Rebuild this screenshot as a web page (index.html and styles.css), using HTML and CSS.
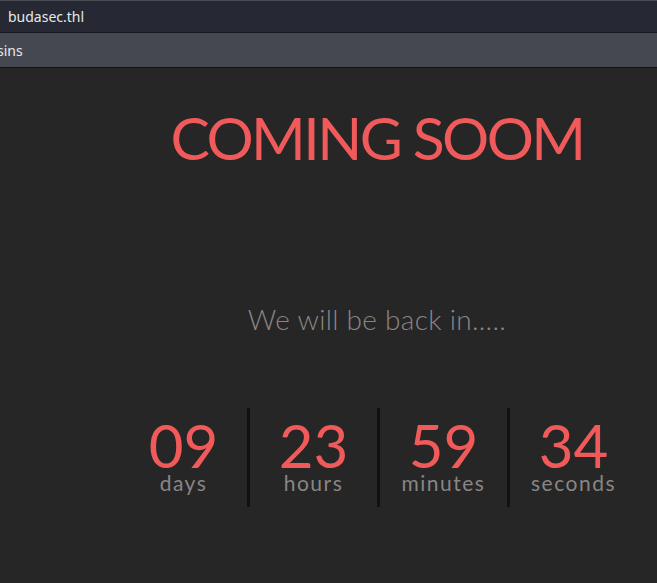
FILE: index.html
```html
<!DOCTYPE html>
<html>
<head>
<meta charset="utf-8">
<link rel="stylesheet" href="styles.css">
</head>
<body>
<div class="tabbar"><span class="tab-title">budasec.thl</span></div>
<div class="bookmarks"><span class="bm-text">sins</span></div>
<main class="page">
  <h1 class="title">COMING SOOM</h1>
  <p class="subtitle">We will be back in.....</p>
  <div class="countdown">
    <div class="unit"><span class="num">09</span><span class="label">days</span></div>
    <div class="unit"><span class="num">23</span><span class="label">hours</span></div>
    <div class="unit"><span class="num">59</span><span class="label">minutes</span></div>
    <div class="unit"><span class="num">34</span><span class="label">seconds</span></div>
  </div>
</main>
</body>
</html>
```
FILE: styles.css
```css
html, body {
  margin: 0;
  padding: 0;
  background: #262626;
  overflow: hidden;
  height: 583px;
}
body {
  font-family: "Open Sans", "DejaVu Sans", sans-serif;
}
.tabbar {
  height: 31px;
  border-top: 1px solid #4b4d55;
  border-bottom: 1px solid #16171b;
  background: #262833;
  display: flex;
  align-items: center;
  padding-left: 8px;
}
.tab-title {
  color: #e8e8ea;
  font-family: "Noto Sans", "DejaVu Sans", sans-serif;
  font-size: 14px;
}
.bookmarks {
  height: 34px;
  background: #454850;
  border-bottom: 1px solid #121317;
  display: flex;
  align-items: center;
  margin-left: -3px;
}
.bm-text {
  color: #e8e8ea;
  font-family: "Noto Sans", "DejaVu Sans", sans-serif;
  font-size: 14px;
}
.page {
  width: 754px;
  text-align: center;
}
.title {
  margin: 0;
  padding-top: 35px;
  font-family: "Lato", sans-serif;
  font-weight: 400;
  font-size: 59px;
  line-height: 70px;
  letter-spacing: -2.6px;
  color: #f05a5a;
}
.subtitle {
  margin: 0;
  padding-top: 131px;
  font-family: "Lato", sans-serif;
  font-weight: 300;
  font-size: 28px;
  line-height: 30px;
  letter-spacing: 0.3px;
  color: #8a8585;
}
.countdown {
  display: flex;
  justify-content: center;
  margin-top: 74px;
}
.unit {
  width: 130px;
  height: 99px;
  display: flex;
  flex-direction: column;
  align-items: center;
  border-left: 3px solid #111111;
  box-sizing: border-box;
}
.unit:first-child {
  border-left: 3px solid transparent;
}
.num {
  font-family: "Lato", sans-serif;
  font-weight: 400;
  font-size: 60px;
  line-height: 44px;
  margin-top: 15px;
  color: #f05a5a;
}
.label {
  font-family: "Lato", sans-serif;
  font-weight: 400;
  font-size: 21px;
  line-height: 22px;
  margin-top: 5px;
  letter-spacing: 1.5px;
  color: #8a8585;
}
```
